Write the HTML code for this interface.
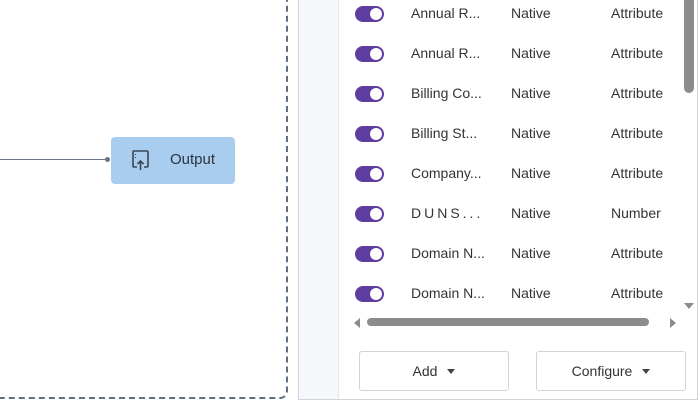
<!DOCTYPE html>
<html><head><meta charset="utf-8"><style>
*{box-sizing:border-box;margin:0;padding:0}
body{width:699px;height:413px;background:#fff;position:relative;overflow:hidden;font-family:"Liberation Sans",Arial,sans-serif;color:#333}
.dash{position:absolute;left:-20px;top:-20px;width:308px;height:419px;border:2px dashed #5f6f85;border-radius:8px}
.line{position:absolute;left:0;top:159px;width:106px;height:1px;background:#6a7585}
.dot{position:absolute;left:105px;top:157px;width:5px;height:5px;border-radius:50%;background:#6a7585}
.node{position:absolute;left:111px;top:137px;width:124px;height:47px;background:#a9cdef;border-radius:4px;font-size:15px;color:#2b3440}
.node span{position:absolute;left:59px;top:14px}
.panel{position:absolute;left:298px;top:-5px;width:400px;height:405px;border:1px solid #cfd3da;background:#fff}
.strip{position:absolute;left:0;top:0;width:40px;height:100%;background:#f6f7fa;border-right:1px solid #e6e8ec}
.row{position:absolute;left:0;height:20px;font-size:14px}
.tg{position:absolute;left:56px;top:2px;width:29px;height:16px;border-radius:8px;background:#5e3d9f}
.tg:after{content:"";position:absolute;right:2px;top:2px;width:12px;height:12px;border-radius:50%;background:#fff}
.c1{position:absolute;left:112px;top:1px;white-space:nowrap}
.c2{position:absolute;left:212px;top:1px}
.c3{position:absolute;left:312px;top:1px}
.vthumb{position:absolute;left:385px;top:0;width:10px;height:97px;background:#8c8c8c;border-radius:5px}
.hthumb{position:absolute;left:68px;top:322px;width:282px;height:8px;background:#8c8c8c;border-radius:4px}
.btn{position:absolute;top:355px;width:150px;height:40px;border:1px solid #cfd3da;border-radius:3px;font-size:14px;text-align:center;line-height:38px;color:#333}
.btn i{display:inline-block;width:0;height:0;border-left:4px solid transparent;border-right:4px solid transparent;border-top:5px solid #444;margin-left:10px;vertical-align:2px}
</style></head><body>
<div class="dash"></div>
<div class="line"></div><div class="dot"></div>
<div class="node">
<svg style="position:absolute;left:20px;top:13px" width="19" height="21" viewBox="0 0 19 21" fill="none" stroke="#3a4655" stroke-width="1.6"><path d="M6 17H3a1 1 0 0 1-1-1V2a1 1 0 0 1 1-1h13a1 1 0 0 1 1 1v14a1 1 0 0 1-1 1h-3"/><path d="M9.5 20V11M6.5 14l3-3 3 3"/><path d="M4.5 4v1M4.5 7v1" stroke-width="1.2"/></svg>
<span>Output</span></div>
<div class="panel">
<div class="strip"></div>
<div class="row" style="top:8px"><div class="tg"></div><div class="c1">Annual R...</div><div class="c2">Native</div><div class="c3">Attribute</div></div>
<div class="row" style="top:48px"><div class="tg"></div><div class="c1">Annual R...</div><div class="c2">Native</div><div class="c3">Attribute</div></div>
<div class="row" style="top:88px"><div class="tg"></div><div class="c1">Billing Co...</div><div class="c2">Native</div><div class="c3">Attribute</div></div>
<div class="row" style="top:128px"><div class="tg"></div><div class="c1">Billing St...</div><div class="c2">Native</div><div class="c3">Attribute</div></div>
<div class="row" style="top:168px"><div class="tg"></div><div class="c1">Company...</div><div class="c2">Native</div><div class="c3">Attribute</div></div>
<div class="row" style="top:208px"><div class="tg"></div><div class="c1" style="letter-spacing:3px">DUNS...</div><div class="c2">Native</div><div class="c3">Number</div></div>
<div class="row" style="top:248px"><div class="tg"></div><div class="c1">Domain N...</div><div class="c2">Native</div><div class="c3">Attribute</div></div>
<div class="row" style="top:288px"><div class="tg"></div><div class="c1">Domain N...</div><div class="c2">Native</div><div class="c3">Attribute</div></div>
<div class="vthumb"></div>
<svg style="position:absolute;left:385px;top:307px" width="10" height="8"><path d="M0 0h10L5 6z" fill="#8c8c8c"/></svg>
<svg style="position:absolute;left:55px;top:322px" width="8" height="10"><path d="M6 0v10L0 5z" fill="#8c8c8c"/></svg>
<svg style="position:absolute;left:370px;top:322px" width="8" height="10"><path d="M1 0v10l6-5z" fill="#8c8c8c"/></svg>
<div class="hthumb"></div>
<div class="btn" style="left:60px">Add<i></i></div>
<div class="btn" style="left:237px">Configure<i></i></div>
</div>
</body></html>
